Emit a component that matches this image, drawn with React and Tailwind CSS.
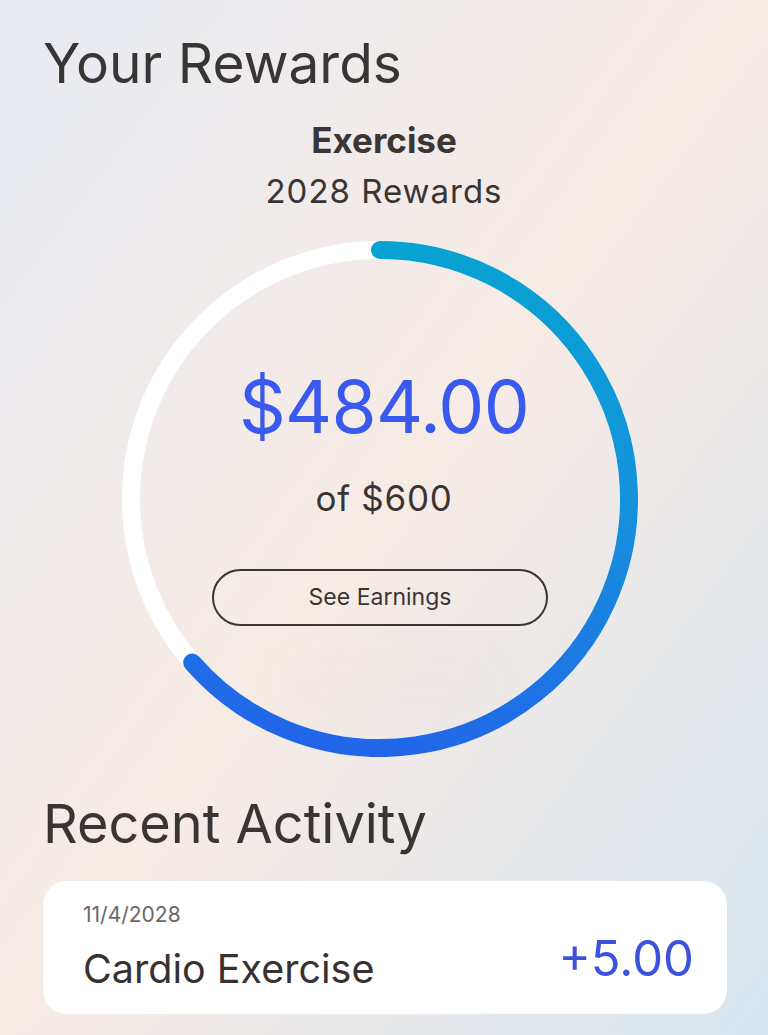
import React from "react";

const font = { fontFamily: "Inter, 'Noto Sans', 'Liberation Sans', sans-serif" };

// ring geometry (viewBox 516x516)
const SIZE = 516;
const C = SIZE / 2;
const R = 249;
const STROKE = 18;

function arcPath(fraction) {
  const a = fraction * 2 * Math.PI;
  const x = C + R * Math.sin(a);
  const y = C - R * Math.cos(a);
  const large = fraction > 0.5 ? 1 : 0;
  return `M ${C} ${C - R} A ${R} ${R} 0 ${large} 1 ${x.toFixed(1)} ${y.toFixed(1)}`;
}

function ProgressRing({ fraction }) {
  return (
    <svg
      className="absolute inset-0"
      width={SIZE}
      height={SIZE}
      viewBox={`0 0 ${SIZE} ${SIZE}`}
    >
      <defs>
        <linearGradient id="ringGrad" gradientUnits="userSpaceOnUse" x1="300" y1="0" x2="200" y2="516">
          <stop offset="0" stopColor="#07a2d2" />
          <stop offset="0.45" stopColor="#1690dd" />
          <stop offset="1" stopColor="#2263e9" />
        </linearGradient>
      </defs>
      <circle cx={C} cy={C} r={R} fill="none" stroke="#ffffff" strokeWidth={STROKE} />
      <path
        d={arcPath(fraction)}
        fill="none"
        stroke="url(#ringGrad)"
        strokeWidth={STROKE}
        strokeLinecap="round"
      />
    </svg>
  );
}

export default function App() {
  return (
    <div
      className="w-[768px] h-[1035px] overflow-hidden bg-linear-to-br from-[#e7ebf3] via-[#f7ebe5] to-[#d7e5ef] text-[#3a3535]"
      style={font}
    >
      <div className="pl-[43px] pt-[36px]">
        <h1 className="text-[55px] leading-none font-normal">Your Rewards</h1>
      </div>

      <div className="flex flex-col items-center">
        <div className="mt-[32px] text-[35px] leading-none font-bold text-[#3b3535]">Exercise</div>
        <div className="mt-[17px] text-[33px] leading-none tracking-[0.03em]">2028 Rewards</div>
      </div>

      <div className="flex justify-center pr-[8px] mt-[33px]">
        <div className="relative w-[516px] h-[516px]">
          <div className="absolute left-[160px] top-[420px] w-[210px] h-[40px] rounded-full bg-[#6b6b7a]/[0.025] blur-xl" />
          <ProgressRing fraction={0.636} />
          <div className="relative flex flex-col items-center pt-[129px]">
            <div className="pl-[8px] text-[73px] leading-none text-[#3a59ef] tracking-[-0.01em]">$484.00</div>
            <div className="pl-[8px] mt-[38px] text-[35px] leading-none tracking-[0.02em]">of $600</div>
            <button
              type="button"
              className="mt-[53px] w-[336px] h-[57px] rounded-full border-2 border-[#3b3535] text-[23px] leading-none text-[#3b3535] flex items-center justify-center"
            >
              See Earnings
            </button>
          </div>
        </div>
      </div>

      <div className="pl-[43px] pr-[41px]">
        <h2 className="mt-[40px] text-[54px] leading-none font-normal">Recent Activity</h2>

        <div className="mt-[30px] h-[133px] rounded-[24px] bg-white pl-[40px] pr-[33px] pt-[23px]">
          <div className="text-[21px] leading-none text-[#6d6868]">11/4/2028</div>
          <div className="mt-[25px] flex items-start justify-between">
            <div className="text-[39.5px] leading-none text-[#363232]">Cardio Exercise</div>
            <div className="-mt-[16px] text-[49px] leading-none text-[#3a52dc]">+5.00</div>
          </div>
        </div>
      </div>
    </div>
  );
}
